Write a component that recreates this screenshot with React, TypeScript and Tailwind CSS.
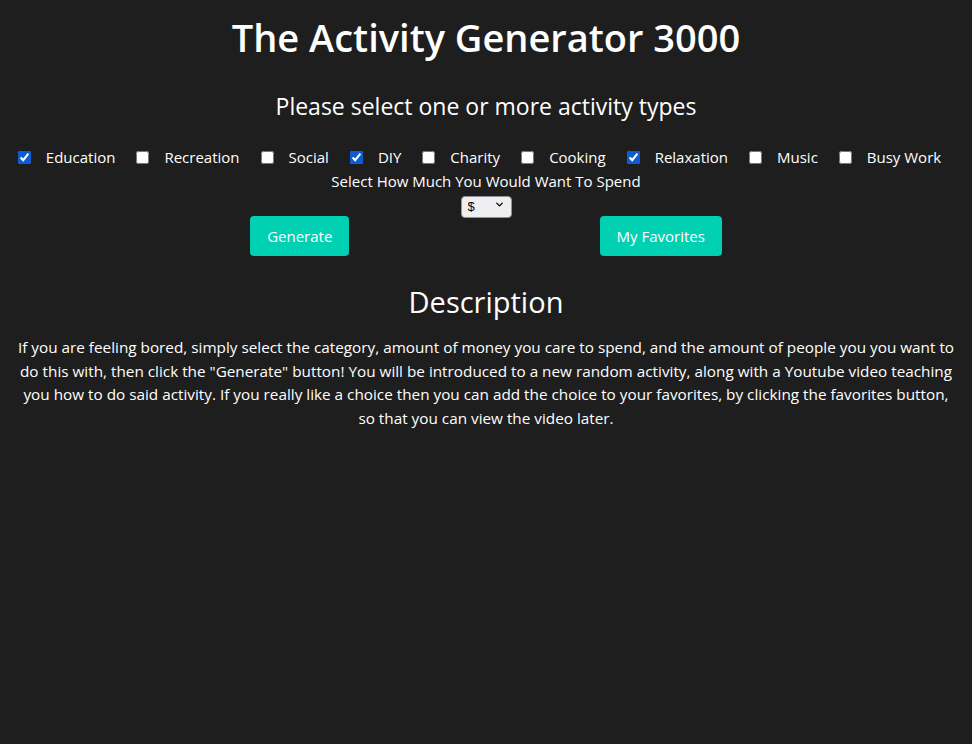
import { useState } from "react";
import { ChevronDown } from "lucide-react";

const TYPES = [
  { label: "Education", checked: true },
  { label: "Recreation", checked: false },
  { label: "Social", checked: false },
  { label: "DIY", checked: true },
  { label: "Charity", checked: false },
  { label: "Cooking", checked: false },
  { label: "Relaxation", checked: true },
  { label: "Music", checked: false },
  { label: "Busy Work", checked: false },
];

export default function App() {
  const [types, setTypes] = useState(TYPES);

  return (
    <div className="min-h-[744px] bg-[#1e1e1e] text-white font-['Open_Sans','Noto_Sans',sans-serif] text-center">
      <h1 className="pt-[12px] text-[38px] leading-[50px] font-semibold">The Activity Generator 3000</h1>

      <h3 className="mt-[28px] text-[23px] leading-[32px]">Please select one or more activity types</h3>

      {/* Activity type checkboxes */}
      <div className="mt-[23px] flex justify-center items-center text-[15px] leading-[24px]">
        {types.map((t, i) => (
          <label key={t.label} className="flex items-center">
            <input
              type="checkbox"
              checked={t.checked}
              onChange={() =>
                setTypes(types.map((x, j) => (j === i ? { ...x, checked: !x.checked } : x)))
              }
              className="w-[13px] h-[13px] ml-[4px] mr-[15px] accent-[#0b5cd5]"
            />
            <span className="mr-[17px]">{t.label}</span>
          </label>
        ))}
      </div>

      <p className="text-[15px] leading-[24px]">Select How Much You Would Want To Spend</p>

      <div className="flex justify-center">
        <div className="relative w-[51px] h-[22px]">
          <select className="appearance-none w-full h-full bg-[#efefef] text-black border border-[#8f8f9d] rounded-[4px] pl-[6px] text-[13px] font-['Liberation_Sans',sans-serif]">
            <option>$</option>
            <option>$$</option>
            <option>$$$</option>
          </select>
          <ChevronDown className="absolute right-[7px] top-[6px] w-[11px] h-[11px] text-black pointer-events-none" strokeWidth={3} />
        </div>
      </div>

      <div className="mt-[1px] flex justify-evenly">
        <button className="h-[40px] px-[17px] rounded-[4px] bg-[#00d1b2] text-white text-[15px]">Generate</button>
        <button className="h-[40px] px-[17px] rounded-[4px] bg-[#00d1b2] text-white text-[15px]">My Favorites</button>
      </div>

      <h2 className="mt-[26px] text-[29px] leading-[40px]">Description</h2>

      <p className="mt-[14px] px-[16px] text-[15.3px] leading-[23.7px]">
        If you are feeling bored, simply select the category, amount of money you care to spend, and the amount of people you you want to do this with, then click the "Generate" button! You will be introduced to a new random activity, along with a Youtube video teaching you how to do said activity. If you really like a choice then you can add the choice to your favorites, by clicking the favorites button, so that you can view the video later.
      </p>
    </div>
  );
}
